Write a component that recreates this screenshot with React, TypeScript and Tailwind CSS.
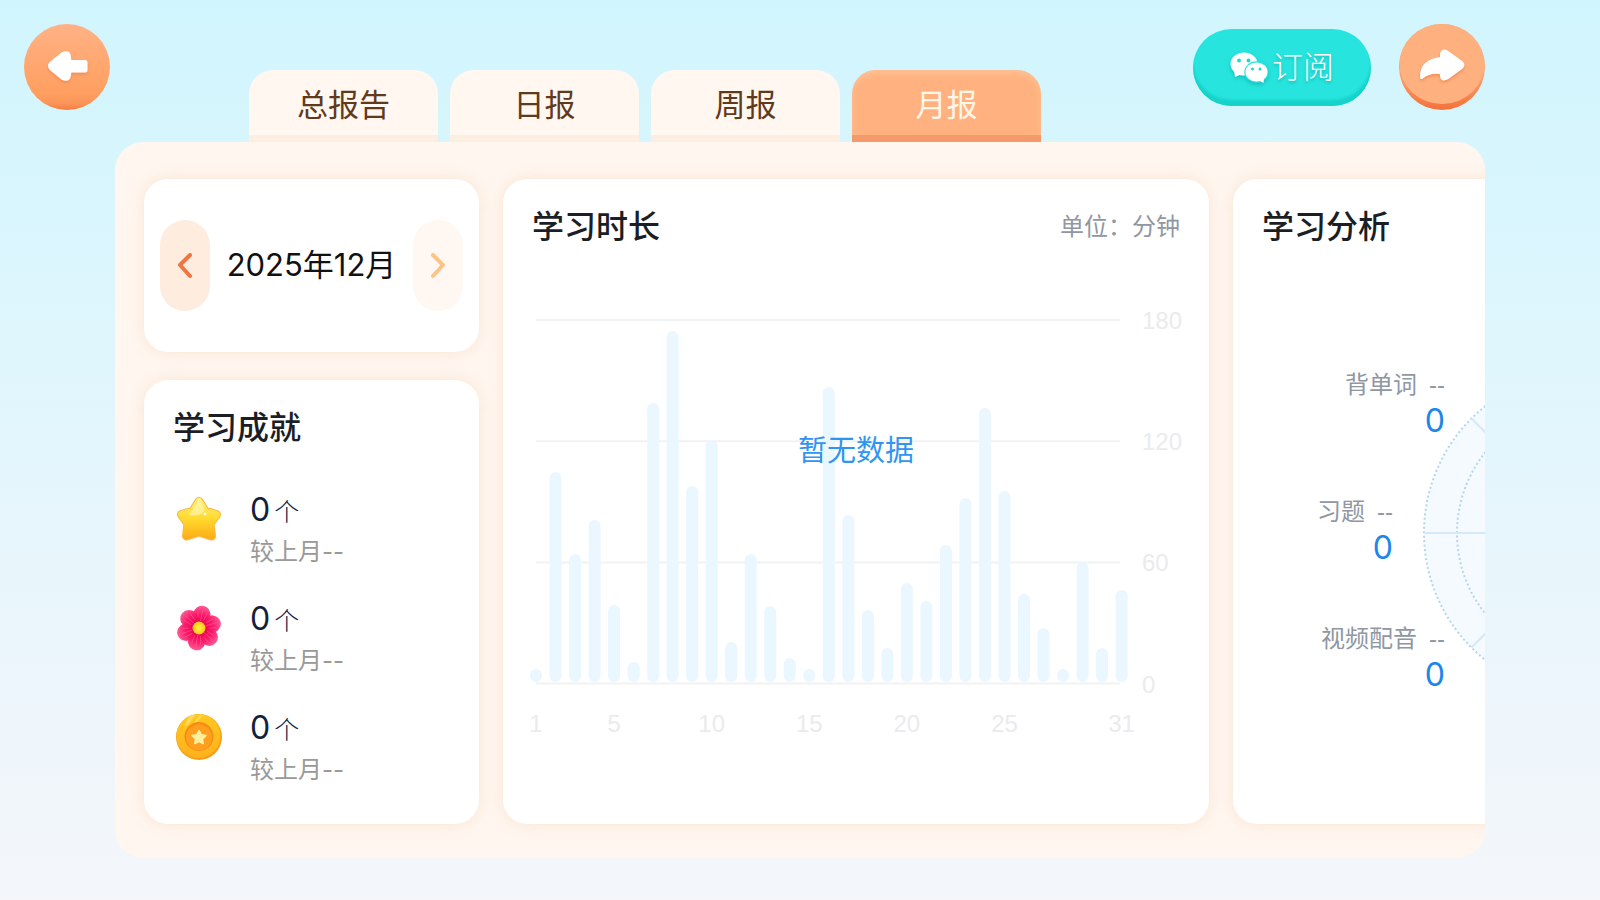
import React, { useState } from 'react';

const TABS = ['总报告', '日报', '周报', '月报'];

// Placeholder bars, one per day of the month, shown while there is no data
const BARS = [
  13, 210, 128, 162, 77, 20, 279, 351, 196, 242, 40, 128, 76, 24, 13, 295,
  167, 72, 34, 99, 81, 137, 184, 274, 191, 88, 54, 13, 120, 34, 92,
];
const X_LABELS = [1, 5, 10, 15, 20, 25, 31];
const Y_LABELS = [180, 120, 60, 0];
const STEP = 19.52;

function BackIcon() {
  return (
    <svg viewBox="0 0 86 86" className="w-full h-full" aria-hidden="true">
      <defs>
        <linearGradient id="back-face" x1="0" y1="0" x2="0" y2="1">
          <stop offset="0" stopColor="#ffb286" />
          <stop offset="0.8" stopColor="#ff9f60" />
          <stop offset="0.92" stopColor="#fb955a" />
          <stop offset="1" stopColor="#f57c3c" />
        </linearGradient>
        <filter id="back-shadow" x="-20%" y="-20%" width="140%" height="150%">
          <feDropShadow dx="0" dy="2" stdDeviation="1.5" floodColor="#ea7a3c" floodOpacity="0.55" />
        </filter>
      </defs>
      <circle cx="43" cy="43" r="43" fill="url(#back-face)" />
      <path
        d="M28 39.500 L39 30.500 Q44 28 44.500 33 L45 38.500 L61 38.500 L61 46 L45 46 L44.500 51 Q44 56 39 53.500 L28 44.500 Q25 42 28 39.500 Z"
        fill="#fff"
        stroke="#fff"
        strokeWidth="5"
        strokeLinejoin="round"
        filter="url(#back-shadow)"
      />
    </svg>
  );
}

function ShareIcon() {
  return (
    <svg viewBox="0 0 86 86" className="w-full h-full" aria-hidden="true">
      <defs>
        <linearGradient id="share-edge" x1="0" y1="0" x2="0" y2="1">
          <stop offset="0.6" stopColor="#fba06c" />
          <stop offset="1" stopColor="#f4713a" />
        </linearGradient>
        <filter id="share-shadow" x="-20%" y="-20%" width="140%" height="150%">
          <feDropShadow dx="0" dy="2" stdDeviation="1.5" floodColor="#e9763a" floodOpacity="0.6" />
        </filter>
      </defs>
      <circle cx="43" cy="43" r="43" fill="url(#share-edge)" />
      <ellipse cx="43" cy="40" rx="42.500" ry="40" fill="#ffb07f" />
      <path
        d="M42.500 30 Q43.500 25.500 48 28 L62.500 38.500 Q65 41 62.500 43.500 L48 54 Q43 56.500 42.500 52 L42.500 49 Q31 46.500 22.500 53.500 Q22 36.500 42.500 34.500 Z"
        fill="#fff"
        stroke="#fff"
        strokeWidth="3"
        strokeLinejoin="round"
        filter="url(#share-shadow)"
      />
    </svg>
  );
}

function WechatIcon() {
  return (
    <svg viewBox="0 0 38 32" className="w-[38px] h-8 drop-shadow-[0_2px_2px_rgba(10,150,145,0.5)]" aria-hidden="true">
      <path d="M4 18 L5 25 L12 22 Z" fill="#fff" />
      <ellipse cx="14" cy="12" rx="13.500" ry="11.500" fill="#fff" />
      <circle cx="9" cy="8.500" r="1.900" fill="#27d5cf" />
      <circle cx="18.500" cy="8.500" r="1.900" fill="#27d5cf" />
      <ellipse cx="26.500" cy="20" rx="12.200" ry="10.700" fill="#27e5de" />
      <ellipse cx="26.500" cy="20" rx="11" ry="9.500" fill="#fff" />
      <path d="M28 28 L33.500 31 L34 25 Z" fill="#fff" />
      <circle cx="22.500" cy="17" r="1.500" fill="#27d5cf" />
      <circle cx="30" cy="17" r="1.500" fill="#27d5cf" />
    </svg>
  );
}

const STAR_PATH =
  'M23 5.500 L29 15 L40.500 18.500 L34 27.500 L35.500 40 L23 36 L10.500 40 L12 27.500 L5.500 18.500 L17 15 Z';

function StarIcon() {
  return (
    <svg viewBox="0 0 46 46" className="w-[46px] h-[46px]" aria-hidden="true">
      <defs>
        <linearGradient id="star-face" gradientUnits="userSpaceOnUse" x1="0" y1="2" x2="0" y2="44">
          <stop offset="0" stopColor="#fff280" />
          <stop offset="0.5" stopColor="#ffd92e" />
          <stop offset="1" stopColor="#ffa915" />
        </linearGradient>
      </defs>
      <path d={STAR_PATH} fill="#f9b52f" stroke="#f9b840" strokeWidth="9" strokeLinejoin="round" />
      <path d={STAR_PATH} fill="url(#star-face)" stroke="url(#star-face)" strokeWidth="7" strokeLinejoin="round" />
      <path d="M22 4 Q28 8 28 16 Q22 21 13 19 Q19 11 22 4 Z" fill="#fffbd0" opacity="0.5" />
      <circle cx="29" cy="18" r="1.500" fill="#fffde0" />
    </svg>
  );
}

function FlowerIcon() {
  return (
    <svg viewBox="0 0 46 46" className="w-[46px] h-[46px]" aria-hidden="true">
      <defs>
        <radialGradient id="petal" gradientUnits="userSpaceOnUse" cx="23" cy="23" r="22">
          <stop offset="0.2" stopColor="#e8004e" />
          <stop offset="0.65" stopColor="#fb1c6c" />
          <stop offset="1" stopColor="#ff5a96" />
        </radialGradient>
        <radialGradient id="pollen">
          <stop offset="0.2" stopColor="#ffee33" />
          <stop offset="1" stopColor="#ffbf1f" />
        </radialGradient>
      </defs>
      {[12, 73, 132, 190, 252, 313].map((a) => (
        <g key={a} transform={`rotate(${a} 23 23)`}>
          <path d="M23 23 Q12 13 15 6 Q17.500 0.500 23 0.500 Q28.500 0.500 31 6 Q34 13 23 23 Z" fill="url(#petal)" />
          <path d="M23 16 L23 5 M20 15 L18.500 7 M26 15 L27.500 7" stroke="#ff8fb8" strokeWidth="0.8" opacity="0.4" />
        </g>
      ))}
      <circle cx="23" cy="23" r="6.500" fill="url(#pollen)" />
    </svg>
  );
}

function CoinIcon() {
  return (
    <svg viewBox="0 0 46 46" className="w-[46px] h-[46px]" aria-hidden="true">
      <defs>
        <linearGradient id="coin-face" x1="0" y1="0" x2="0" y2="1">
          <stop offset="0" stopColor="#ffc91f" />
          <stop offset="1" stopColor="#ffb11c" />
        </linearGradient>
      </defs>
      <circle cx="23" cy="23" r="23" fill="#f99d17" />
      <circle cx="22.500" cy="22" r="22" fill="url(#coin-face)" />
      <path d="M14 2 L20 0.500 L12 11 L8 12 Z M24 0.500 L27 1 L21 8 L18 9 Z" fill="#ffe680" opacity="0.6" />
      <circle cx="23" cy="22.500" r="14.500" fill="#f58d12" />
      <circle cx="23" cy="23.500" r="13" fill="#ff9f1f" />
      <path
        d="M23 16.500 L25.200 20.700 L30 21.500 L26.500 25 L27.200 29.500 L23 27.500 L18.800 29.500 L19.500 25 L16 21.500 L20.800 20.700 Z"
        fill="#fff0a0"
        stroke="#fff0a0"
        strokeWidth="1.500"
        strokeLinejoin="round"
      />
    </svg>
  );
}

const ACHIEVEMENTS = [
  { id: 'star', icon: <StarIcon />, count: 0 },
  { id: 'flower', icon: <FlowerIcon />, count: 0 },
  { id: 'coin', icon: <CoinIcon />, count: 0 },
];

const ANALYSIS = [
  { name: '背单词', value: 0, offset: '' },
  { name: '习题', value: 0, offset: 'mr-[52px]' },
  { name: '视频配音', value: 0, offset: '' },
];

function Card({ className = '', children }: { className?: string; children: React.ReactNode }) {
  return (
    <section className={`bg-white rounded-3xl shadow-[0_0_14px_rgba(235,195,155,0.35)] ${className}`}>
      {children}
    </section>
  );
}

function CardTitle({ children }: { children: React.ReactNode }) {
  return <h2 className="text-[32px] leading-[48px] font-medium text-[#1b1e25]">{children}</h2>;
}

function Chevron({ className, points }: { className: string; points: string }) {
  return (
    <svg viewBox="0 0 16 26" className={`w-4 h-[26px] ${className}`} fill="none" aria-hidden="true">
      <polyline points={points} stroke="currentColor" strokeWidth="4" strokeLinecap="round" strokeLinejoin="round" />
    </svg>
  );
}

function DurationChart() {
  return (
    <svg viewBox="0 0 660 440" className="block w-full" role="img" aria-label="学习时长">
      {Y_LABELS.map((v, i) => (
        <g key={v}>
          <line x1="10" x2="594" y1={21 + i * 121.2} y2={21 + i * 121.2} stroke="#f1f2f3" strokeWidth="2" />
          <text x="616" y={30 + i * 121.2} fontSize="24" fill="#eaebec" className="font-['Liberation_Sans',sans-serif]">
            {v}
          </text>
        </g>
      ))}
      {BARS.map((h, i) => (
        <rect key={i} x={4 + i * STEP} y={383 - h} width="12" height={h} rx="6" fill="#eaf7fe" />
      ))}
      {X_LABELS.map((d) => (
        <text
          key={d}
          x={10 + (d - 1) * STEP}
          y="433"
          fontSize="24"
          textAnchor="middle"
          fill="#eaebec"
          className="font-['Liberation_Sans',sans-serif]"
        >
          {d}
        </text>
      ))}
      <text x="330" y="162" fontSize="29" textAnchor="middle" fill="#3095f0">
        暂无数据
      </text>
    </svg>
  );
}

function Radar() {
  return (
    <svg viewBox="0 0 326 326" className="w-[326px] h-[326px] shrink-0 -ml-[22px]" aria-hidden="true">
      <circle cx="163" cy="163" r="162" fill="#f5fafe" />
      {[162, 129, 97, 65, 32].map((r) => (
        <circle
          key={r}
          cx="163"
          cy="163"
          r={r}
          fill="none"
          stroke="#b4d5ef"
          strokeWidth="2"
          strokeDasharray="2 2.500"
        />
      ))}
      {[0, 45, 90, 135].map((a) => (
        <line key={a} x1="1" y1="163" x2="325" y2="163" stroke="#d7e8f6" strokeWidth="2" transform={`rotate(${a} 163 163)`} />
      ))}
    </svg>
  );
}

export default function App() {
  const [activeTab, setActiveTab] = useState('月报');

  return (
    <div className="min-h-screen pb-[42px] bg-gradient-to-b from-[#d1f5fe] to-[#f4f6fa] font-['Inter','Noto_Sans_CJK_SC',sans-serif]">
      <header className="flex items-start pt-6 pl-6 pr-[115px]">
        <button aria-label="返回" className="w-[86px] h-[86px] shrink-0 rounded-full cursor-pointer">
          <BackIcon />
        </button>

        <nav className="flex gap-3 ml-[139px] mt-[46px]">
          {TABS.map((tab) => (
            <button
              key={tab}
              onClick={() => setActiveTab(tab)}
              className={`w-[189px] h-[72px] pt-1 rounded-t-3xl border-b-[7px] text-[31px] leading-10 cursor-pointer ${
                tab === activeTab
                  ? 'bg-[#ffb27f] border-[#f49969] text-[#fff6ea] shadow-[inset_0_4px_6px_rgba(255,205,170,0.5)]'
                  : 'bg-[#fff7f0] border-[#fdeee2] text-[#613a1c]'
              }`}
            >
              {tab}
            </button>
          ))}
        </nav>

        <div className="flex items-start gap-7 ml-auto">
          <button className="flex items-center justify-center gap-1 w-[178px] h-[77px] mt-[5px] rounded-full bg-[#27e5de] text-white text-[31px] font-light shadow-[inset_0_-6px_3px_#16d2c9] cursor-pointer">
            <WechatIcon />
            <span className="[text-shadow:0_2px_3px_rgba(10,150,145,0.5)]">订阅</span>
          </button>
          <button aria-label="分享" className="w-[86px] h-[86px] shrink-0 rounded-full cursor-pointer">
            <ShareIcon />
          </button>
        </div>
      </header>

      <main className="flex gap-6 mx-[115px] pt-[37px] pb-[34px] px-[29px] rounded-[28px] bg-[#fff6ef] overflow-hidden">
        <div className="flex flex-col gap-7 w-[335px] shrink-0">
          <Card className="flex items-center justify-between h-[173px] px-4">
            <button aria-label="上个月" className="flex items-center justify-center w-[50px] h-[91px] rounded-full bg-[#feeddf] cursor-pointer">
              <Chevron className="text-[#ee7643]" points="13,2 3,12 13,23" />
            </button>
            <span className="text-[31px] text-[#111]">2025年12月</span>
            <button aria-label="下个月" disabled className="flex items-center justify-center w-[50px] h-[91px] rounded-full bg-[#fff7f2]">
              <Chevron className="text-[#fbc588]" points="3,2 13,12 3,23" />
            </button>
          </Card>

          <Card className="flex-1 px-[29px] pt-6 pb-[25px]">
            <CardTitle>学习成就</CardTitle>
            <ul className="mt-5 pl-[3px]">
              {ACHIEVEMENTS.map((item) => (
                <li key={item.id} className="flex gap-7 h-[109px] pt-4">
                  <div className="shrink-0 pt-2">{item.icon}</div>
                  <div className="pt-0.5">
                    <p className="flex items-baseline gap-1 h-[42px] text-[25px] leading-10 text-[#12203c]">
                      <span className="text-[32px]">{item.count}</span>
                      <span className="font-light">个</span>
                    </p>
                    <p className="text-2xl leading-10 text-[#999]">较上月--</p>
                  </div>
                </li>
              ))}
            </ul>
          </Card>
        </div>

        <Card className="w-[706px] shrink-0 pt-6 pb-[72px]">
          <div className="flex items-center justify-between px-[29px]">
            <CardTitle>学习时长</CardTitle>
            <span className="text-2xl text-[#8f97a3]">单位：分钟</span>
          </div>
          <div className="mt-12 px-[23px]">
            <DurationChart />
          </div>
        </Card>

        <Card className="w-[706px] shrink-0 pt-6">
          <div className="px-[29px]">
            <CardTitle>学习分析</CardTitle>
          </div>
          <div className="flex items-center mt-[116px]">
            <ul className="flex flex-col items-end w-[212px] shrink-0 gap-[55px] pb-1.5">
              {ANALYSIS.map((item) => (
                <li key={item.name} className={`text-right ${item.offset}`}>
                  <p className="text-2xl leading-9 text-[#8f97a3]">
                    {item.name}
                    <span className="ml-3 font-['Liberation_Sans',sans-serif]">--</span>
                  </p>
                  <p className="text-[32px] leading-9 text-[#1c86ea]">{item.value}</p>
                </li>
              ))}
            </ul>
            <Radar />
          </div>
        </Card>
      </main>
    </div>
  );
}
